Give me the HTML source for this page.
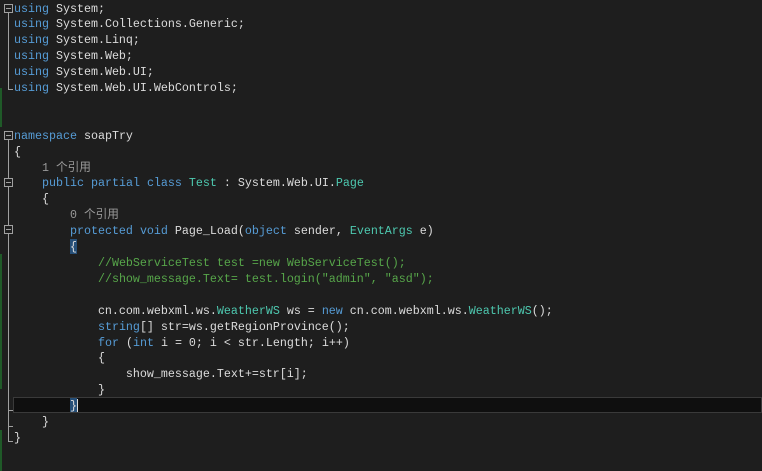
<!DOCTYPE html>
<html><head><meta charset="utf-8"><style>
body{margin:0;width:762px;height:471px;background:#1e1e1e;overflow:hidden;position:relative}
pre{margin:0;position:absolute;left:14px;top:1.5px;font-family:"Liberation Mono","Noto Sans CJK SC",monospace;font-size:11.67px;line-height:15.9px;color:#dcdcdc}
.k{color:#569cd6}.t{color:#4ec9b0}.c{color:#57a64a}.s{color:#d69d85}.l{color:#999}
.g{position:absolute;left:0;width:2px;background:#1f5a28}
.b{position:absolute;left:4px;width:7px;height:7px;border:1px solid #a0a0a0;}
.b:after{content:"";position:absolute;left:1px;top:3px;width:5px;height:1px;background:#a0a0a0}
.v{position:absolute;left:8px;width:1px;background:#a0a0a0}
.h{position:absolute;left:8px;width:5px;height:1px;background:#a0a0a0}
.cur{position:absolute;left:13px;right:0;top:397px;height:14px;background:#0f0f0f;border:1px solid #3a3a3a}
.br{position:absolute;left:70px;top:398px;width:7px;height:14px;background:#264f78}
.br2{position:absolute;left:70px;top:239px;width:7px;height:15px;background:#264f78}
</style></head><body>
<div class="g" style="top:88px;height:39px"></div>
<div class="g" style="top:254px;height:135px"></div>
<div class="g" style="top:430px;height:41px"></div>
<div class="cur"></div><div class="br"></div><div class="br2"></div>
<div style="position:absolute;left:77px;top:399px;width:1px;height:13px;background:#dcdcdc"></div>
<div class="b" style="top:4px"></div>
<div class="v" style="top:13px;height:77px"></div><div class="h" style="top:89px"></div>
<div class="b" style="top:131px"></div>
<div class="v" style="top:140px;height:302px"></div>
<div class="b" style="top:178px;background:#1e1e1e"></div>
<div class="b" style="top:225px;background:#1e1e1e"></div>
<div class="h" style="top:410px"></div><div class="h" style="top:426px"></div><div class="h" style="top:441px"></div>
<pre><span class="k">using</span> System;
<span class="k">using</span> System.Collections.Generic;
<span class="k">using</span> System.Linq;
<span class="k">using</span> System.Web;
<span class="k">using</span> System.Web.UI;
<span class="k">using</span> System.Web.UI.WebControls;


<span class="k">namespace</span> soapTry
{
    <span class="l">1 个引用</span>
    <span class="k">public</span> <span class="k">partial</span> <span class="k">class</span> <span class="t">Test</span> : System.Web.UI.<span class="t">Page</span>
    {
        <span class="l">0 个引用</span>
        <span class="k">protected</span> <span class="k">void</span> Page_Load(<span class="k">object</span> sender, <span class="t">EventArgs</span> e)
        {
            <span class="c">//WebServiceTest test =new WebServiceTest();</span>
            <span class="c">//show_message.Text= test.login("admin", "asd");</span>

            cn.com.webxml.ws.<span class="t">WeatherWS</span> ws = <span class="k">new</span> cn.com.webxml.ws.<span class="t">WeatherWS</span>();
            <span class="k">string</span>[] str=ws.getRegionProvince();
            <span class="k">for</span> (<span class="k">int</span> i = 0; i &lt; str.Length; i++)
            {
                show_message.Text+=str[i];
            }
        }
    }
}</pre>
</body></html>
